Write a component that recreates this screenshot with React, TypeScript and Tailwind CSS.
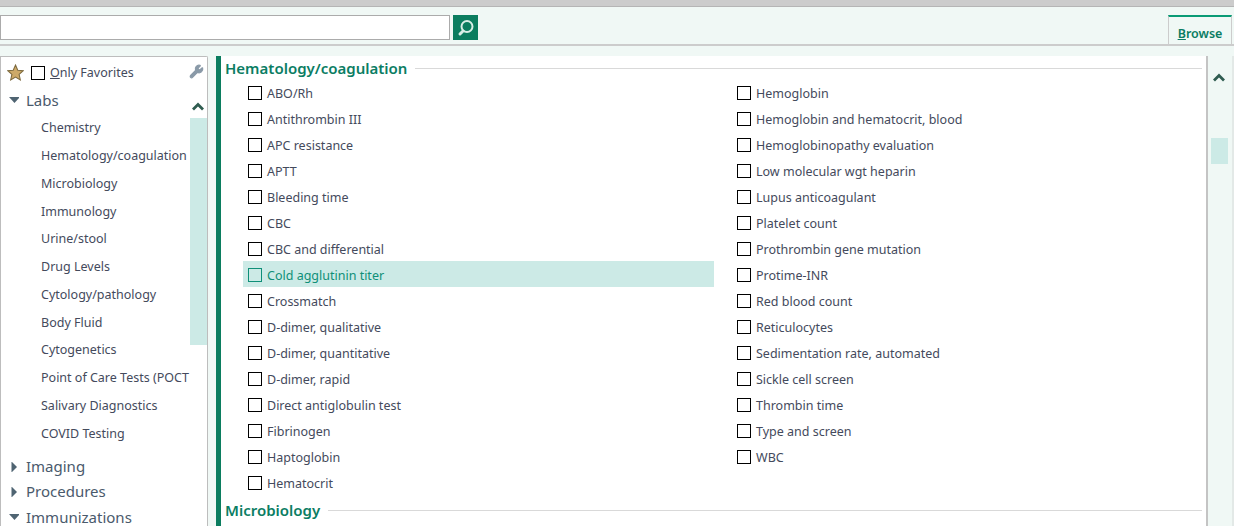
import { Wrench } from 'lucide-react'

const navLabs = [
  'Chemistry',
  'Hematology/coagulation',
  'Microbiology',
  'Immunology',
  'Urine/stool',
  'Drug Levels',
  'Cytology/pathology',
  'Body Fluid',
  'Cytogenetics',
  'Point of Care Tests (POCT',
  'Salivary Diagnostics',
  'COVID Testing',
]

const leftTests = [
  'ABO/Rh',
  'Antithrombin III',
  'APC resistance',
  'APTT',
  'Bleeding time',
  'CBC',
  'CBC and differential',
  'Cold agglutinin titer',
  'Crossmatch',
  'D-dimer, qualitative',
  'D-dimer, quantitative',
  'D-dimer, rapid',
  'Direct antiglobulin test',
  'Fibrinogen',
  'Haptoglobin',
  'Hematocrit',
]

const rightTests = [
  'Hemoglobin',
  'Hemoglobin and hematocrit, blood',
  'Hemoglobinopathy evaluation',
  'Low molecular wgt heparin',
  'Lupus anticoagulant',
  'Platelet count',
  'Prothrombin gene mutation',
  'Protime-INR',
  'Red blood count',
  'Reticulocytes',
  'Sedimentation rate, automated',
  'Sickle cell screen',
  'Thrombin time',
  'Type and screen',
  'WBC',
]

function Caret({ open }: { open?: boolean }) {
  return (
    <svg width="10" height="10" viewBox="0 0 10 10" className="shrink-0">
      {open ? <path d="M0 2h11L5.5 8z" fill="#4f6472" /> : <path d="M2.5 -.5v11L8 5z" fill="#4f6472" />}
    </svg>
  )
}

function ScrollUp() {
  return (
    <svg width="12" height="9" viewBox="0 0 12 9" className="block">
      <path d="M1 7.5l5-5 5 5" fill="none" stroke="#2f5c50" strokeWidth="2.8" />
    </svg>
  )
}

function TestRow({ label, active }: { label: string; active?: boolean }) {
  return (
    <div className={`flex h-[26px] items-center gap-[5px] pl-[5px] pt-[4px] ${active ? 'bg-[#cceae6] text-[#0f8f78]' : 'text-[#444a5c]'}`}>
      <span className={`mb-[2px] h-[14px] w-[14px] shrink-0 border ${active ? 'border-[#0f8f78]' : 'border-black bg-white'}`} />
      <span>{label}</span>
    </div>
  )
}

function SectionTitle({ label }: { label: string }) {
  return (
    <div className="flex items-center gap-2">
      <span className="text-[15px] font-semibold leading-5 text-[#0b7d63]">{label}</span>
      <span className="h-px flex-1 bg-[#d9d9d9]" />
    </div>
  )
}

export default function App() {
  return (
    <div className="flex h-[526px] w-[1234px] flex-col overflow-hidden bg-[#f0f8f5] font-['Noto_Sans',sans-serif] text-[12.5px]">
      <div className="h-[7px] shrink-0 border-b border-[#b5b5b5] bg-[#cccccc]" />

      <div className="flex h-[39px] shrink-0 items-end justify-between border-b-2 border-[#cccccc]">
        <div className="mb-[4px] flex gap-[3px]">
          <input className="h-[25px] w-[450px] border border-[#ababab] bg-white" />
          <button type="button" className="h-[25px] w-[25px] bg-[#0b7d5f]">
            <svg width="25" height="25" viewBox="0 0 25 25" className="block">
              <circle cx="14" cy="11.5" r="5.5" fill="none" stroke="#d8eee6" strokeWidth="2" />
              <path d="M10 16l-3 3" stroke="#d8eee6" strokeWidth="3" strokeLinecap="round" />
            </svg>
          </button>
        </div>
        <div className="mr-[2px] flex h-[29px] w-[64px] items-center justify-center border-x border-t-[2px] border-x-[#cccccc] border-t-[#0a9b75] bg-[#f0f8f5] pt-[7px] font-semibold text-[#0b7d63]">
          <span>
            <span className="underline">B</span>rowse
          </span>
        </div>
      </div>

      <div className="flex min-h-0 flex-1 pt-[10px]">
        <aside className="h-[480px] w-[208px] shrink-0 rounded-tr-[2px] border-x border-t border-[#bdbdbd] bg-white">
          <div className="flex h-[31px] items-center pl-[6px] pr-[3px]">
            <svg width="17" height="17" viewBox="0 0 24 24" className="shrink-0">
              <path
                d="M12 1.5l3.2 7.2 7.8.8-5.900 5.200 1.700 7.800L12 18.500l-6.800 4 1.700-7.800L1 9.500l7.800-.8z"
                fill="#cda968"
                stroke="#7d6a3f"
                strokeWidth="1.5"
              />
            </svg>
            <span className="ml-[7px] h-[14px] w-[14px] border border-black" />
            <span className="ml-[5px] pt-[2px] text-[#444a5c]">
              <span className="underline">O</span>nly Favorites
            </span>
            <Wrench size={15} className="ml-auto mb-[3px] fill-[#8a9aa8] text-[#8a9aa8]" />
          </div>
          <div className="flex h-[24px] items-center gap-[7px] pl-[8px] text-[15px] text-[#4a5a6c]">
            <Caret open />
            <span>Labs</span>
          </div>
          <div className="relative pb-[6px] pt-[2.6px]">
            <div className="absolute right-[3px] top-[-10px]">
              <ScrollUp />
            </div>
            <div className="absolute right-0 top-[6px] h-[227px] w-[17px] bg-[#cceae6]" />
            {navLabs.map((item) => (
              <div key={item} className="relative flex h-[27.8px] items-center whitespace-nowrap pl-[40px] text-[#444a5c]">
                {item}
              </div>
            ))}
          </div>
          <div className="flex h-[25px] items-center gap-[7px] pl-[8px] text-[15px] text-[#4a5a6c]">
            <Caret />
            <span>Imaging</span>
          </div>
          <div className="flex h-[25px] items-center gap-[7px] pl-[8px] text-[15px] text-[#4a5a6c]">
            <Caret />
            <span>Procedures</span>
          </div>
          <div className="flex h-[26px] items-center gap-[7px] pl-[8px] text-[15px] text-[#4a5a6c]">
            <Caret open />
            <span>Immunizations</span>
          </div>
        </aside>

        <main className="ml-[8px] h-[480px] min-w-0 flex-1 border-l-[5px] border-[#0b7d5f] bg-white pl-[4px] pr-[4px] pt-[2px]">
          <SectionTitle label="Hematology/coagulation" />
          <div className="flex pl-[18px] pt-[1px]">
            <div className="w-[471px]">
              {leftTests.map((t) => (
                <TestRow key={t} label={t} active={t === 'Cold agglutinin titer'} />
              ))}
            </div>
            <div className="ml-[18px] flex-1">
              {rightTests.map((t) => (
                <TestRow key={t} label={t} />
              ))}
            </div>
          </div>
          <div className="pt-[5px]">
            <SectionTitle label="Microbiology" />
          </div>
        </main>

        <div className="h-[480px] w-[28px] shrink-0 border-x-2 border-l-[#c4c4c4] border-r-[#e3e9e7] pt-[17px]">
          <div className="ml-[5px]">
            <ScrollUp />
          </div>
          <div className="ml-[3px] mt-[56px] h-[26px] w-[17px] bg-[#cceae6]" />
        </div>
      </div>
    </div>
  )
}
